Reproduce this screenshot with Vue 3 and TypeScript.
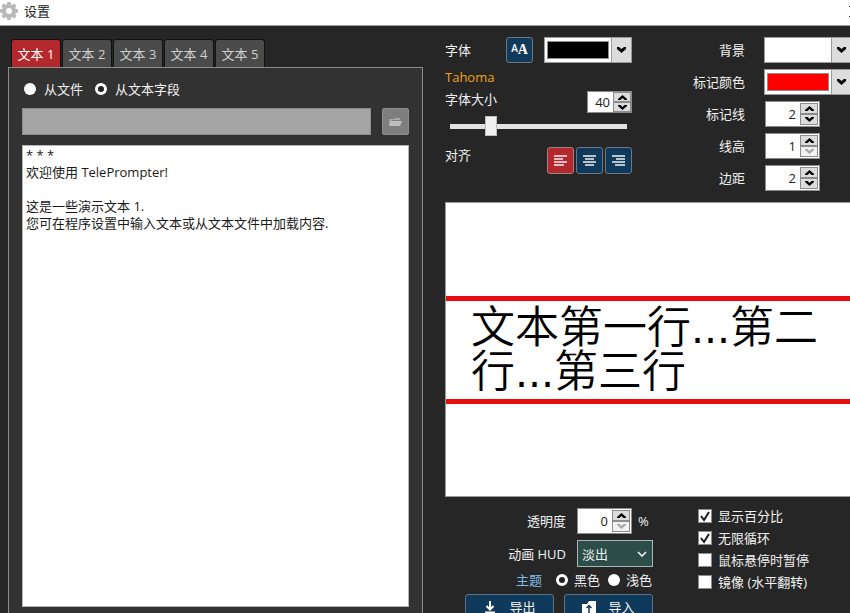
<script setup lang="ts">
import { reactive, ref } from 'vue'

interface NumberField {
  id: string
  label: string
  value: number
  min: number
}

const tabs = [1, 2, 3, 4, 5]
const activeTab = ref(1)
const source = ref<'file' | 'field'>('field')
const filePath = ref('')
const content = ref('* * *\n欢迎使用 TelePrompter!\n\n这是一些演示文本 1.\n您可在程序设置中输入文本或从文本文件中加载内容.')

const fontColor = ref('#000000')
const background = ref('#ffffff')
const markerColor = ref('#ff0000')
const size = reactive<NumberField>({ id: 'size', label: '字体大小', value: 40, min: 1 })
const opacity = reactive<NumberField>({ id: 'opacity', label: '透明度', value: 0, min: 0 })
const metrics = reactive<NumberField[]>([
  { id: 'marker', label: '标记线', value: 2, min: 0 },
  { id: 'line', label: '线高', value: 1, min: 1 },
  { id: 'margin', label: '边距', value: 2, min: 0 },
])

const align = ref('left')
const aligns = [
  { id: 'left', label: '左对齐', d: 'M1 2h13M1 5h9M1 8h13M1 11h10' },
  { id: 'center', label: '居中', d: 'M1 2h13M3 5h9M1 8h13M3 11h9' },
  { id: 'right', label: '右对齐', d: 'M1 2h13M5 5h9M1 8h13M4 11h10' },
]

const hud = ref('fade')
const theme = ref('dark')
const options = reactive([
  { label: '显示百分比', on: true },
  { label: '无限循环', on: true },
  { label: '鼠标悬停时暂停', on: false },
  { label: '镜像 (水平翻转)', on: false },
])

function step(field: NumberField, by: number) {
  field.value = Math.max(field.min, field.value + by)
}
</script>

<template>
  <div class="window">
    <header class="titlebar">
      <svg class="gear" viewBox="0 0 18 18" aria-hidden="true">
        <g fill="#b9b9b9">
          <rect v-for="a in [0, 45, 90, 135]" :key="a" x="7" y="0" width="4" height="18" rx="1" :transform="`rotate(${a} 9 9)`" />
          <circle cx="9" cy="9" r="7" />
        </g>
        <circle cx="9" cy="9" r="3" fill="#fff" />
      </svg>
      <h1>设置</h1>
      <button class="close" aria-label="关闭">
        <svg viewBox="0 0 11 11"><path d="M0 0L11 11M11 0L0 11" stroke="#222" fill="none" /></svg>
      </button>
    </header>

    <main class="body">
      <section class="editor">
        <nav class="tabs" role="tablist">
          <button
            v-for="n in tabs"
            :key="n"
            role="tab"
            class="tab"
            :class="{ active: n === activeTab }"
            :aria-selected="n === activeTab"
            @click="activeTab = n"
          >文本 {{ n }}</button>
        </nav>
        <div class="panel">
          <div class="sources">
            <label><input v-model="source" type="radio" name="source" value="file" />从文件</label>
            <label><input v-model="source" type="radio" name="source" value="field" />从文本字段</label>
          </div>
          <div class="file-row">
            <input v-model="filePath" class="path" type="text" aria-label="文件" disabled />
            <button class="browse" aria-label="浏览" disabled>
              <svg viewBox="0 0 15 10">
                <path d="M1 9V2h5l1-1h5v2H4L1 9Z" fill="#a9a9a9" />
                <path d="M3 4h11l-2 5H1Z" fill="#bdbdbd" />
              </svg>
            </button>
          </div>
          <textarea v-model="content" class="script" aria-label="文本" spellcheck="false"></textarea>
        </div>
      </section>

      <section class="settings">
        <div class="controls">
          <div class="font">
            <div class="row">
              <label class="grow" for="font-color">字体</label>
              <button class="tool font-button" aria-label="选择字体">
                <span class="small-a">A</span><span class="big-a">A</span>
              </button>
              <div class="combo">
                <input id="font-color" v-model="fontColor" type="color" />
                <button aria-label="字体颜色"><svg viewBox="0 0 9 6"><path d="M0 0h2l2.500 2L7 0h2v2L4.500 6 0 2Z" /></svg></button>
              </div>
            </div>
            <p class="font-name">Tahoma</p>
            <div class="row top">
              <label class="grow" for="size">{{ size.label }}</label>
              <div class="spin compact">
                <input id="size" v-model.number="size.value" type="text" inputmode="numeric" />
                <div class="arrows">
                  <button aria-label="增加" @click="step(size, 1)"><svg viewBox="0 0 9 5"><path d="M4.500 0L9 4v1H6.500l-2-2-2 2H0V4Z" /></svg></button>
                  <button aria-label="减少" @click="step(size, -1)"><svg viewBox="0 0 9 5"><path d="M4.500 5L9 1V0H6.500l-2 2-2-2H0v1Z" /></svg></button>
                </div>
              </div>
            </div>
            <input v-model.number="size.value" class="slider" type="range" min="8" max="160" aria-label="字体大小" />
            <div class="row top">
              <span class="grow">对齐</span>
              <div class="aligns">
                <button
                  v-for="a in aligns"
                  :key="a.id"
                  class="tool"
                  :class="{ active: a.id === align }"
                  :aria-label="a.label"
                  @click="align = a.id"
                >
                  <svg viewBox="0 0 15 13"><path :d="a.d" stroke="#f2f2f2" stroke-width="1.500" fill="none" /></svg>
                </button>
              </div>
            </div>
          </div>

          <div class="fields">
            <label for="bg">背景</label>
            <div class="combo">
              <input id="bg" v-model="background" class="plain" type="color" />
              <button aria-label="背景颜色"><svg viewBox="0 0 9 6"><path d="M0 0h2l2.500 2L7 0h2v2L4.500 6 0 2Z" /></svg></button>
            </div>
            <label for="marker-color">标记颜色</label>
            <div class="combo">
              <input id="marker-color" v-model="markerColor" type="color" />
              <button aria-label="选择标记颜色"><svg viewBox="0 0 9 6"><path d="M0 0h2l2.500 2L7 0h2v2L4.500 6 0 2Z" /></svg></button>
            </div>
            <template v-for="m in metrics" :key="m.id">
              <label :for="m.id">{{ m.label }}</label>
              <div class="spin">
                <input :id="m.id" v-model.number="m.value" type="text" inputmode="numeric" />
                <div class="arrows">
                  <button aria-label="增加" @click="step(m, 1)"><svg viewBox="0 0 9 5"><path d="M4.500 0L9 4v1H6.500l-2-2-2 2H0V4Z" /></svg></button>
                  <button aria-label="减少" :disabled="m.value <= m.min" @click="step(m, -1)"><svg viewBox="0 0 9 5"><path d="M4.500 5L9 1V0H6.500l-2 2-2-2H0v1Z" /></svg></button>
                </div>
              </div>
            </template>
          </div>
        </div>

        <div class="preview">
          <p class="lines">文本第一行<span>...</span>第二行<span>...</span>第三行</p>
        </div>

        <footer class="bottom">
          <div class="display">
            <div class="pairs">
              <label for="opacity">{{ opacity.label }}</label>
              <div class="with-unit">
                <div class="spin">
                  <input id="opacity" v-model.number="opacity.value" type="text" inputmode="numeric" />
                  <div class="arrows">
                    <button aria-label="增加" @click="step(opacity, 1)"><svg viewBox="0 0 9 5"><path d="M4.500 0L9 4v1H6.500l-2-2-2 2H0V4Z" /></svg></button>
                    <button aria-label="减少" :disabled="opacity.value <= opacity.min" @click="step(opacity, -1)"><svg viewBox="0 0 9 5"><path d="M4.500 5L9 1V0H6.500l-2 2-2-2H0v1Z" /></svg></button>
                  </div>
                </div>
                <span>%</span>
              </div>
              <label for="hud">动画 HUD</label>
              <div class="select">
                <select id="hud" v-model="hud"><option value="fade">淡出</option></select>
                <svg viewBox="0 0 10 6"><path d="M1 1l4 4 4-4" stroke="#fff" stroke-width="1.500" fill="none" /></svg>
              </div>
            </div>
            <div class="themes">
              <a href="#">主题</a>
              <label><input v-model="theme" type="radio" name="theme" value="dark" />黑色</label>
              <label><input v-model="theme" type="radio" name="theme" value="light" />浅色</label>
            </div>
            <div class="actions">
              <button>
                <svg viewBox="0 0 14 14"><path d="M7 1v8M3.500 6L7 9.500 10.500 6M2 12.500h10" stroke="#fff" stroke-width="2" fill="none" /></svg>
                导出
              </button>
              <button>
                <svg viewBox="0 0 14 14"><path d="M0 4h5l2-3h7v13H0Z" fill="#fff" /><path d="M7 13V6M4.500 8L7 5.500 9.500 8" stroke="#103a5c" stroke-width="1.500" fill="none" /></svg>
                导入
              </button>
            </div>
          </div>
          <div class="options">
            <label v-for="o in options" :key="o.label">
              <span class="check">
                <input v-model="o.on" type="checkbox" />
                <svg v-if="o.on" viewBox="0 0 14 14"><path d="M3 7l3 4 5-8" stroke="#1c1c1c" stroke-width="2" fill="none" /></svg>
              </span>
              {{ o.label }}
            </label>
          </div>
        </footer>
      </section>
    </main>
  </div>
</template>

<style>
body {
  background: #262626;
}
</style>

<style scoped>
.window {
  display: flex;
  flex-direction: column;
  height: 100vh;
  overflow: hidden;
  background: #262626;
  color: #f2f2f2;
  font: 13px/16px "Open Sans", "Noto Sans CJK SC", sans-serif;
}
.window * {
  box-sizing: border-box;
}
button,
input,
select,
textarea {
  margin: 0;
  padding: 0;
  border-radius: 0;
  font: inherit;
  color: inherit;
}
button {
  display: flex;
  align-items: center;
  justify-content: center;
}
svg {
  display: block;
  flex: none;
}
p,
h1 {
  margin: 0;
}

.titlebar {
  display: flex;
  align-items: center;
  gap: 6px;
  flex: none;
  height: 26px;
  padding-bottom: 3px;
  background: #fff;
  border-bottom: 1px solid #9a9a9a;
  color: #222;
}
.gear {
  width: 18px;
  height: 18px;
}
.titlebar h1 {
  font-size: 13px;
  font-weight: 400;
}
.close {
  margin-left: auto;
  margin-right: -10px;
  border: 0;
  background: none;
}
.close svg {
  width: 11px;
  height: 11px;
}

.body {
  display: grid;
  grid-template-columns: 415fr 405fr;
  column-gap: 22px;
  flex: 1;
  min-height: 0;
  padding-left: 8px;
}
.editor {
  display: flex;
  flex-direction: column;
  min-width: 0;
  padding-top: 13px;
}
.tabs {
  display: flex;
  gap: 1px;
  padding-left: 3px;
}
.tab {
  width: 50px;
  height: 28px;
  border: 1px solid #111;
  border-bottom: 0;
  border-radius: 3px 3px 0 0;
  background: #4b4b4b;
  color: #d0d0d0;
  white-space: nowrap;
}
.tab.active {
  background: #b3282c;
  color: #fff;
}
.panel {
  display: flex;
  flex-direction: column;
  flex: 1;
  min-height: 0;
  padding: 13px 13px 6px;
  background: #323232;
  border: solid #8c8c8c;
  border-width: 1px 1px 0;
}
.sources {
  display: flex;
  gap: 12px;
  padding-left: 2px;
}
.sources label,
.themes label {
  display: flex;
  align-items: center;
  gap: 8px;
}
input[type="radio"] {
  appearance: none;
  width: 12px;
  height: 12px;
  border-radius: 50%;
  background: #fff;
}
input[type="radio"]:checked {
  border: 3px solid #fff;
  background: #222;
}
.file-row {
  display: flex;
  gap: 11px;
  margin: 11px 0 10px;
}
.path {
  flex: 1;
  min-width: 0;
  height: 27px;
  background: #a5a5a5;
  border: 1px solid #8a8a8a;
}
.browse {
  width: 27px;
  height: 27px;
  background: #7e7e7e;
  border: 1px solid #8c8c8c;
  border-radius: 2px;
}
.browse svg {
  width: 15px;
  height: 10px;
}
.script {
  flex: 1;
  min-height: 0;
  padding: 1px 3px;
  border: 1px solid #b4b4b4;
  outline: 0;
  background: #fff;
  color: #1a1a1a;
  line-height: 17px;
  resize: none;
}

.settings {
  display: flex;
  flex-direction: column;
  min-width: 0;
  margin: 0 -2px -6px 0;
  padding-top: 11px;
}
.controls {
  display: grid;
  grid-template-columns: 187px 1fr;
}
.font {
  display: flex;
  flex-direction: column;
}
.row {
  display: flex;
  align-items: center;
  gap: 11px;
}
.row.top {
  align-items: flex-start;
}
.grow {
  flex: 1;
}
.font-name {
  margin: 6px 0;
  color: #f0a020;
}
.tool {
  width: 27px;
  height: 27px;
  border: 1px solid #6c7780;
  border-radius: 3px;
  background: #103a5c;
  color: #fff;
}
.tool.active {
  background: #b3282c;
  border-color: #a08080;
}
.tool svg {
  width: 15px;
  height: 13px;
}
.font-button {
  height: 26px;
  font-family: "Open Sans", sans-serif;
  font-weight: 600;
}
.small-a {
  font-size: 10px;
  padding-bottom: 4px;
}
.big-a {
  font-size: 14px;
  font-family: "Liberation Serif", serif;
}
.aligns {
  display: flex;
  gap: 2px;
}
.combo {
  display: flex;
  width: 88px;
  height: 26px;
  border: 1px solid #9a9a9a;
  background: #fff;
}
.combo input {
  appearance: none;
  flex: 1;
  min-width: 0;
  height: 24px;
  padding: 3px 2px;
  border: 0;
  background: #fff;
}
.combo input::-webkit-color-swatch-wrapper {
  padding: 0;
}
.combo input::-webkit-color-swatch {
  border: 1px solid #8e8e8e;
}
.combo .plain::-webkit-color-swatch {
  border-color: #fff;
}
.combo button {
  width: 20px;
  border: 0;
  border-left: 1px solid #9a9a9a;
  background: #dcdcdc;
}
.combo svg {
  width: 9px;
  height: 6px;
}
.spin {
  display: flex;
  width: 55px;
  height: 26px;
  padding: 1px;
  border: 1px solid #8c8c8c;
  background: #fff;
  color: #222;
}
.spin.compact {
  width: 45px;
  height: 22px;
  padding: 0;
}
.spin input {
  flex: 1;
  min-width: 0;
  padding-right: 4px;
  border: 0;
  background: #fff;
  text-align: right;
}
.spin.compact input {
  padding-right: 3px;
}
.arrows {
  display: flex;
  flex-direction: column;
  width: 18px;
}
.arrows button {
  flex: 1;
  min-height: 0;
  border: 1px solid #8c8c8c;
  background: #dcdcdc;
}
.arrows button:disabled {
  background: #f2f2f2;
  fill: #a8a8a8;
}
.arrows svg {
  width: 9px;
  height: 5px;
}
.slider {
  appearance: none;
  height: 20px;
  margin: 3px 5px 11px;
  background: linear-gradient(#e2e2e2, #e2e2e2) center / 100% 5px no-repeat;
}
.slider::-webkit-slider-thumb {
  appearance: none;
  width: 12px;
  height: 20px;
  border: 1px solid #bdbdbd;
  background: #f0f0f0;
}
.fields {
  display: grid;
  grid-template-columns: 1fr 88px;
  gap: 6px 19px;
  align-items: center;
}
.fields > label,
.pairs > label {
  text-align: right;
}
.fields .spin {
  margin-left: 1px;
}

.preview {
  display: flex;
  flex-direction: column;
  justify-content: center;
  flex: 1;
  min-height: 0;
  margin: 11px 0;
  border: 1px solid #9a9a9a;
  background: #fff;
}
.lines {
  padding: 1px 25px 9px;
  border: solid #e80c0c;
  border-width: 5px 0;
  color: #000;
  font: 350 44px/44px "Noto Sans CJK SC", sans-serif;
}
.lines span {
  font-family: "DejaVu Sans", sans-serif;
  font-weight: 400;
  font-size: 41px;
  line-height: 30px;
}

.bottom {
  display: flex;
  align-items: flex-start;
  gap: 45px;
}
.display {
  width: 208px;
}
.pairs {
  display: grid;
  grid-template-columns: 1fr 76px;
  gap: 6px 11px;
  align-items: center;
}
.with-unit {
  display: flex;
  align-items: center;
  gap: 6px;
}
.select {
  display: grid;
  align-items: center;
  height: 27px;
  border: 1px solid #aab8b4;
  background: #2d4d49;
}
.select > * {
  grid-area: 1 / 1;
}
.select select {
  appearance: none;
  width: 100%;
  height: 25px;
  padding-left: 4px;
  border: 0;
  background: transparent;
}
.select svg {
  width: 10px;
  height: 6px;
  margin-right: 5px;
  justify-self: end;
  pointer-events: none;
}
.themes {
  display: flex;
  align-items: center;
  justify-content: flex-end;
  gap: 8px;
  height: 27px;
  padding: 0 1px 2px 0;
}
.themes label {
  gap: 6px;
}
.themes a {
  margin-right: 6px;
  color: #7fbde6;
  text-decoration: none;
}
.actions {
  display: grid;
  grid-template-columns: 1fr 1fr;
  gap: 10px;
  padding-left: 20px;
}
.actions button {
  gap: 12px;
  height: 25px;
  border: 1px solid #5d7182;
  border-radius: 3px;
  background: #103a5c;
}
.actions svg {
  width: 14px;
  height: 14px;
}
.options {
  display: flex;
  flex-direction: column;
  gap: 6px;
}
.options label {
  display: flex;
  align-items: center;
  gap: 6px;
  white-space: nowrap;
}
.check {
  display: grid;
}
.check > * {
  grid-area: 1 / 1;
}
.check input {
  appearance: none;
  width: 14px;
  height: 14px;
  border: 1px solid #8c8c8c;
  background: #fff;
}
.check svg {
  width: 14px;
  height: 14px;
  pointer-events: none;
}
</style>
